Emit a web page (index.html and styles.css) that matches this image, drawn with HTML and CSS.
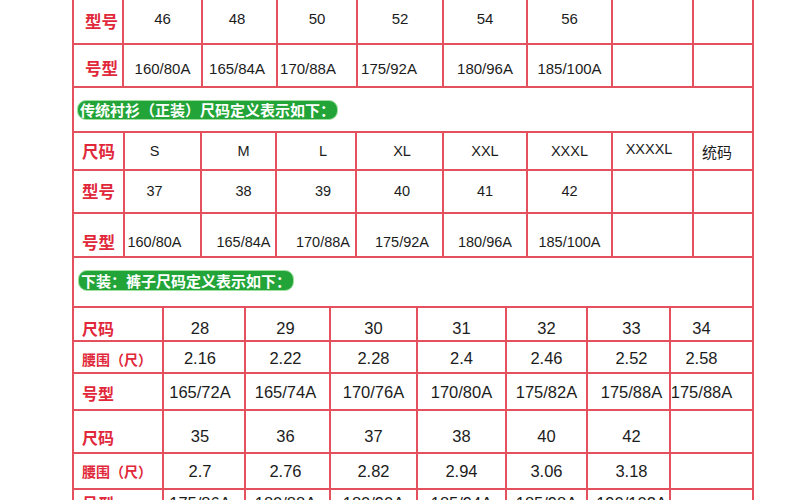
FILE: index.html
```html
<!DOCTYPE html>
<html lang="zh-CN">
<head>
<meta charset="utf-8">
<title>尺码表</title>
<link rel="stylesheet" href="styles.css">
</head>
<body>
<div class="sheet">
  <div class="sec s1">
    <div class="row ra">
      <div class="c lab">型号</div><div class="c">46</div><div class="c">48</div><div class="c">50</div><div class="c">52</div><div class="c">54</div><div class="c">56</div><div class="c"></div><div class="c"></div>
    </div>
    <div class="row rb">
      <div class="c lab">号型</div><div class="c">160/80A</div><div class="c">165/84A</div><div class="c">170/88A</div><div class="c">175/92A</div><div class="c">180/96A</div><div class="c">185/100A</div><div class="c"></div><div class="c"></div>
    </div>
  </div>
  <div class="band b1"><span class="pill">传统衬衫（正装）尺码定义表示如下：</span></div>
  <div class="sec s2">
    <div class="row ra">
      <div class="c lab">尺码</div><div class="c">S</div><div class="c">M</div><div class="c">L</div><div class="c">XL</div><div class="c">XXL</div><div class="c">XXXL</div><div class="c up">XXXXL</div><div class="c cjk">统码</div>
    </div>
    <div class="row rb">
      <div class="c lab">型号</div><div class="c">37</div><div class="c">38</div><div class="c">39</div><div class="c">40</div><div class="c">41</div><div class="c">42</div><div class="c"></div><div class="c"></div>
    </div>
    <div class="row rc">
      <div class="c lab">号型</div><div class="c">160/80A</div><div class="c">165/84A</div><div class="c">170/88A</div><div class="c">175/92A</div><div class="c">180/96A</div><div class="c">185/100A</div><div class="c"></div><div class="c"></div>
    </div>
  </div>
  <div class="band b2"><span class="pill">下装：裤子尺码定义表示如下：</span></div>
  <div class="sec s3">
    <div class="row ra">
      <div class="c lab">尺码</div><div class="c">28</div><div class="c">29</div><div class="c">30</div><div class="c">31</div><div class="c">32</div><div class="c">33</div><div class="c">34</div>
    </div>
    <div class="row rb">
      <div class="c lab sm">腰围（尺）</div><div class="c">2.16</div><div class="c">2.22</div><div class="c">2.28</div><div class="c">2.4</div><div class="c">2.46</div><div class="c">2.52</div><div class="c">2.58</div>
    </div>
    <div class="row rc">
      <div class="c lab">号型</div><div class="c">165/72A</div><div class="c">165/74A</div><div class="c">170/76A</div><div class="c">170/80A</div><div class="c">175/82A</div><div class="c">175/88A</div><div class="c">175/88A</div>
    </div>
    <div class="row rd">
      <div class="c lab">尺码</div><div class="c">35</div><div class="c">36</div><div class="c">37</div><div class="c">38</div><div class="c">40</div><div class="c">42</div><div class="c"></div>
    </div>
    <div class="row re">
      <div class="c lab sm">腰围（尺）</div><div class="c">2.7</div><div class="c">2.76</div><div class="c">2.82</div><div class="c">2.94</div><div class="c">3.06</div><div class="c">3.18</div><div class="c"></div>
    </div>
    <div class="row rf">
      <div class="c lab">号型</div><div class="c">175/86A</div><div class="c">180/88A</div><div class="c">180/90A</div><div class="c">185/94A</div><div class="c">185/98A</div><div class="c">190/102A</div><div class="c"></div>
    </div>
  </div>
</div>
</body>
</html>
```
FILE: styles.css
```css
html, body {
  margin: 0;
  padding: 0;
  background: #ffffff;
}
body {
  height: 500px;
  overflow: hidden;
  font-family: "Liberation Sans", "Noto Sans CJK SC", sans-serif;
  color: #1c1c1c;
}
.sheet {
  margin: -2px 0 0 72px;
  width: 682px;
}
.sec {
  display: flex;
  flex-direction: column;
  gap: 2px;
  padding: 2px;
  background: #e4505d;
}
.row {
  display: grid;
  gap: 2px;
}
.c {
  background: #ffffff;
  display: flex;
  align-items: center;
  justify-content: center;
  line-height: 1;
  white-space: nowrap;
  box-sizing: border-box;
}
.lab {
  justify-content: flex-start;
  color: #e1283a;
  font-family: "Noto Sans CJK SC", sans-serif;
  font-weight: bold;
  padding-left: 8px;
}
.cjk {
  font-family: "Noto Sans CJK SC", sans-serif;
  font-size: 15px;
}

/* section 1 */
.s1 .row { grid-template-columns: 48px 77px 73px 78px 84px 82px 83px 79px 58px; font-size: 15px; }
.s1 .lab { font-size: 16.5px; padding-left: 11px; }
.s1 .ra { height: 43px; }
.s1 .rb { height: 41px; }
.s1 .ra .c:not(.lab) { padding-bottom: 7px; }
.s1 .rb .c { padding-top: 6px; }
.s1 .c:nth-child(3) { padding-right: 5px; }
.s1 .rb .c:nth-child(4) { padding-right: 18px; }
.s1 .rb .c:nth-child(5) { padding-right: 22px; }

/* green bands */
.band {
  background: #ffffff;
  border-left: 2px solid #e4505d;
  border-right: 2px solid #e4505d;
  box-sizing: border-box;
}
.b1 { height: 43px; padding: 12px 0 0 3px; }
.b2 { height: 48px; padding: 12px 0 0 4px; }
.pill {
  display: inline-block;
  background: #22a438;
  color: #ffffff;
  font-family: "Noto Sans CJK SC", sans-serif;
  font-weight: bold;
  font-size: 15px;
  line-height: 18px;
  padding: 0 2px;
  border: 1px solid #9ee09e;
  border-radius: 9px;
}
.b2 .pill { line-height: 19px; }

/* section 2 */
.s2 .row { grid-template-columns: 49px 75px 73px 78px 85px 82px 83px 79px 58px; font-size: 14.5px; }
.s2 .lab { font-size: 16.5px; }
.s2 .ra { height: 36px; }
.s2 .rb { height: 41px; }
.s2 .rc { height: 42px; }
.s2 .rc .c { padding-top: 15px; }
.s2 .c.up { padding-bottom: 4px; }
.s2 .c:nth-child(2) { padding-right: 16px; }
.s2 .c:nth-child(3) { padding-left: 10px; }
.s2 .c:nth-child(4) { padding-left: 14px; }
.s2 .c:nth-child(5) { padding-left: 5px; }
.s2 .c:nth-child(8) { padding-right: 7px; }
.s2 .c:nth-child(9) { padding-right: 12px; }

/* section 3 */
.s3 .row { grid-template-columns: 88px 80px 83px 85px 87px 79px 81px 81px; font-size: 16.5px; }
.s3 .lab { font-size: 16px; }
.s3 .lab.sm { font-size: 14px; }
.s3 .ra { height: 32px; }
.s3 .rb { height: 30px; }
.s3 .rc { height: 35px; }
.s3 .rd { height: 41px; }
.s3 .re { height: 34px; }
.s3 .rf { height: 41px; }
.s3 .ra .c { padding-top: 8px; }
.s3 .rb .c { padding-top: 3px; }
.s3 .rc .c { padding-top: 2px; }
.s3 .rd .c { padding-top: 10px; }
.s3 .rf .c { align-items: flex-start; padding-top: 5px; }
.s3 .c:nth-child(2) { padding-right: 8px; }
.s3 .c:nth-child(3) { padding-right: 4px; }
.s3 .c:nth-child(7) { padding-left: 6px; }
.s3 .c:nth-child(8) { padding-right: 20px; }
```
